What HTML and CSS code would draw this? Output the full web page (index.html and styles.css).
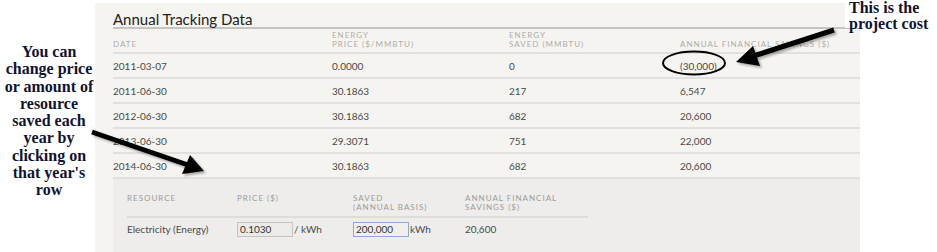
FILE: index.html
```html
<!DOCTYPE html>
<html>
<head>
<meta charset="utf-8">
<link rel="stylesheet" href="styles.css">
</head>
<body>
<div class="page">
  <div class="panel">
    <h2 class="title">Annual Tracking Data</h2>
    <div class="table">
      <div class="row head">
        <div class="lbl">Date</div>
        <div class="lbl">Energy<br>Price ($/MMBTU)</div>
        <div class="lbl">Energy<br>Saved (MMBTU)</div>
        <div class="lbl">Annual Financial Savings ($)</div>
      </div>
      <div class="row"><div>2011-03-07</div><div>0.0000</div><div>0</div><div>(30,000)</div></div>
      <div class="row"><div>2011-06-30</div><div>30.1863</div><div>217</div><div>6,547</div></div>
      <div class="row"><div>2012-06-30</div><div>30.1863</div><div>682</div><div>20,600</div></div>
      <div class="row"><div>2013-06-30</div><div>29.3071</div><div>751</div><div>22,000</div></div>
      <div class="row"><div>2014-06-30</div><div>30.1863</div><div>682</div><div>20,600</div></div>
    </div>
    <div class="detail">
      <div class="dgrid">
        <div class="dhead">
          <div class="lbl">Resource</div>
          <div class="lbl">Price ($)</div>
          <div class="lbl">Saved<br>(Annual Basis)</div>
          <div class="lbl">Annual Financial<br>Savings ($)</div>
        </div>
        <div class="drow">
          <div>Electricity (Energy)</div>
          <div class="field"><input class="inp" type="text" value="0.1030"><span>/ kWh</span></div>
          <div class="field"><input class="inp focus" type="text" value="200,000"><span>kWh</span></div>
          <div>20,600</div>
        </div>
      </div>
    </div>
  </div>

  <div class="note note-left">You can<br>change price<br>or amount of<br>resource<br>saved each<br>year by<br>clicking on<br>that year's<br>row</div>
  <div class="note note-right">This is the<br>project cost</div>

  <svg class="marks" width="937" height="252" viewBox="0 0 937 252">
    <ellipse cx="694" cy="63" rx="31" ry="11.5" fill="none" stroke="#000" stroke-width="2"/>
    <g class="arrow">
      <line x1="834" y1="30" x2="752" y2="56.5" stroke="#000" stroke-width="5"/>
      <polygon points="736,62 753,46 760,66" fill="#000"/>
    </g>
    <g class="arrow">
      <line x1="92" y1="132" x2="188" y2="165" stroke="#000" stroke-width="5"/>
      <polygon points="204,171 182,174 190,155" fill="#000"/>
    </g>
  </svg>
</div>
</body>
</html>
```

FILE: styles.css
```css
html, body {
  margin: 0;
  padding: 0;
  background: #ffffff;
}

.page {
  position: relative;
  width: 937px;
  height: 252px;
  overflow: hidden;
  font-family: Lato, "Open Sans", sans-serif;
}

.panel {
  margin: 3px 0 0 95px;
  width: 765px;
  height: 249px;
  box-sizing: border-box;
  padding-left: 18px;
  background: #f6f4f0;
  display: flex;
  flex-direction: column;
}

.title {
  margin: 0;
  padding-top: 9px;
  font-size: 15px;
  line-height: 15px;
  font-weight: 400;
  color: #222;
  border-bottom: 2px solid #c6c4c0;
}

.table {
  display: flex;
  flex-direction: column;
}

.row {
  display: grid;
  grid-template-columns: 219px 177px 171px 1fr;
  align-items: center;
  height: 23px;
  border-bottom: 2px solid #e2e0dc;
  font-size: 10px;
  color: #4a4a4a;
}

.row.head {
  height: 20px;
  align-items: end;
  padding-bottom: 3px;
}

.lbl {
  font-size: 8px;
  line-height: 9px;
  letter-spacing: 1px;
  text-transform: uppercase;
  color: #aeaca8;
}

.detail {
  flex: 1;
  background: #eeedeb;
  padding: 15px 0 0 14px;
}

.dgrid {
  width: 461px;
}

.dhead {
  display: grid;
  grid-template-columns: 110px 116px 112px 123px;
  align-items: start;
  padding-bottom: 4px;
  border-bottom: 2px solid #dedcd8;
}

.dhead .lbl {
  color: #9d9b98;
}

.drow {
  display: grid;
  grid-template-columns: 110px 116px 112px 123px;
  align-items: center;
  padding-top: 3px;
  height: 16px;
  font-size: 10px;
  color: #4a4a4a;
}

.field {
  display: flex;
  align-items: center;
  gap: 1px;
}

.inp {
  width: 56px;
  height: 15px;
  box-sizing: border-box;
  margin: 0;
  padding: 0 2px;
  border: 1px solid #c4c2be;
  background: #ecebe8;
  font-family: Lato, "Open Sans", sans-serif;
  font-size: 10px;
  color: #333;
  outline: none;
}

.inp.focus {
  border-color: #8ea8d8;
  background: #f0efed;
}

.note {
  position: absolute;
  font-family: "Liberation Serif", "Times New Roman", serif;
  font-weight: 700;
  font-size: 16px;
  color: #121232;
}

.note-left {
  left: 0;
  top: 43px;
  width: 98px;
  text-align: center;
  line-height: 17.25px;
}

.note-right {
  left: 845px;
  top: 0;
  width: 92px;
  height: 28px;
  padding-left: 4px;
  box-sizing: border-box;
  line-height: 16px;
  background: #ffffff;
}

.marks {
  position: absolute;
  left: 0;
  top: 0;
  pointer-events: none;
}

.arrow {
  filter: drop-shadow(2px 2px 1px rgba(0, 0, 0, 0.3));
}
```
